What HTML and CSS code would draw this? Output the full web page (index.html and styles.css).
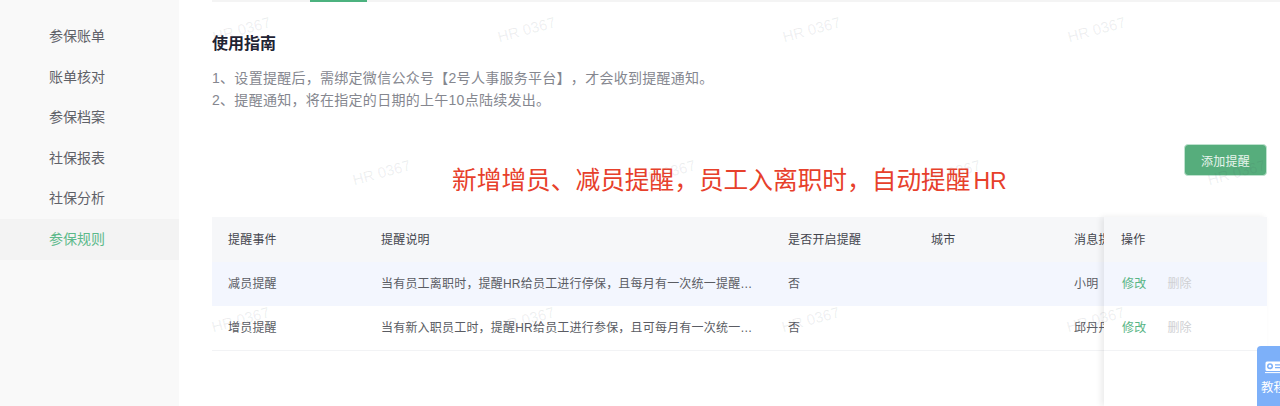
FILE: index.html
```html
<!DOCTYPE html>
<html lang="zh-CN">
<head>
<meta charset="utf-8">
<title>参保规则</title>
<link rel="stylesheet" href="styles.css">
</head>
<body>
<div class="page">
  <nav class="sidebar">
    <a class="nav-item">参保账单</a>
    <a class="nav-item">账单核对</a>
    <a class="nav-item">参保档案</a>
    <a class="nav-item">社保报表</a>
    <a class="nav-item">社保分析</a>
    <a class="nav-item active">参保规则</a>
  </nav>
  <main class="main">
    <div class="tabs"><span class="tab-ink"></span></div>
    <h2 class="guide-title">使用指南</h2>
    <p class="guide-text">1、设置提醒后，需绑定微信公众号【2号人事服务平台】，才会收到提醒通知。<br>2、提醒通知，将在指定的日期的上午10点陆续发出。</p>
    <div class="action-row">
      <div class="headline">新增增员、减员提醒，员工入离职时，自动提醒<span class="headline-hr">HR</span></div>
      <button class="add-btn">添加提醒</button>
    </div>
    <div class="table-wrap">
      <div class="row head">
        <div class="cell">提醒事件</div>
        <div class="cell">提醒说明</div>
        <div class="cell">是否开启提醒</div>
        <div class="cell">城市</div>
        <div class="cell">消息提醒人</div>
      </div>
      <div class="row tinted">
        <div class="cell">减员提醒</div>
        <div class="cell ellipsis">当有员工离职时，提醒HR给员工进行停保，且每月有一次统一提醒，请及时处理</div>
        <div class="cell">否</div>
        <div class="cell"></div>
        <div class="cell">小明</div>
      </div>
      <div class="row">
        <div class="cell">增员提醒</div>
        <div class="cell ellipsis">当有新入职员工时，提醒HR给员工进行参保，且可每月有一次统一提醒，请及时处理</div>
        <div class="cell">否</div>
        <div class="cell"></div>
        <div class="cell">邱丹丹</div>
      </div>
      <div class="fixed-col">
        <div class="fixed-cell head">操作</div>
        <div class="fixed-cell tinted"><a class="link-edit">修改</a><a class="link-del">删除</a></div>
        <div class="fixed-cell bordered"><a class="link-edit">修改</a><a class="link-del">删除</a></div>
      </div>
    </div>
    <div class="watermarks">
      <div class="wm-row wm-a"><span>HR 0367</span><span>HR 0367</span><span>HR 0367</span><span>HR 0367</span></div>
      <div class="wm-row wm-b"><span>HR 0367</span><span>HR 0367</span><span>HR 0367</span><span>HR 0367</span></div>
      <div class="wm-row wm-c"><span>HR 0367</span><span>HR 0367</span><span>HR 0367</span><span>HR 0367</span></div>
    </div>
    <aside class="help">
      <svg class="help-icon" width="22" height="13" viewBox="0 0 22 13">
        <rect x="0.5" y="0.5" width="21" height="9.5" rx="1.5" fill="#fff"/>
        <circle cx="5" cy="5.2" r="3" fill="#7db0f9"/>
        <circle cx="5" cy="5.2" r="1.4" fill="#fff"/>
        <path d="M10 3.8h8M10 6.6h8" stroke="#7db0f9" stroke-width="1.2"/>
        <path d="M0 11.6h22" stroke="#fff" stroke-width="1"/>
      </svg>
      <span class="help-text">教程</span>
    </aside>
  </main>
</div>
</body>
</html>
```
FILE: styles.css
```css
* { box-sizing: border-box; }
html, body { margin: 0; height: 100%; overflow: hidden; background: #fff; }
body { font-family: "Liberation Sans", "Noto Sans CJK SC", sans-serif; text-spacing-trim: space-all; }
.page { display: flex; height: 406px; width: 1280px; overflow: hidden; }

.sidebar { position: relative; z-index: 2; width: 179px; flex: none; padding-top: 16px; background: #f9f9f9; }
.nav-item { display: block; height: 40.6px; line-height: 40.6px; padding-left: 49px; font-size: 14px; color: #5f6168; }
.nav-item.active { color: #5cb98a; background: #f3f3f3; }

.main { position: relative; flex: 1; min-width: 0; padding: 0 13px 0 33px; display: flex; flex-direction: column; overflow: hidden; }
.tabs { position: relative; height: 2px; margin-right: -13px; background: #f4f4f4; flex: none; }
.tab-ink { position: absolute; left: 98px; top: 0; width: 57px; height: 2px; background: #4cb27f; }
.guide-title { margin: 31px 0 0; font-size: 16px; line-height: 22px; font-weight: 700; color: #1f2333; }
.guide-text { margin: 12px 0 0; font-size: 14px; line-height: 22px; letter-spacing: .28px; color: #85878f; }

.action-row { display: flex; justify-content: flex-end; height: 32px; margin-top: 33px; position: relative; flex: none; }
.headline { position: absolute; left: 240px; top: 19px; font-size: 24.7px; line-height: 36px; color: #e7402b; white-space: nowrap; }
.headline-hr { margin-left: 3px; font-size: 23px; }
.add-btn { width: 83px; height: 32px; padding: 0; border: 1px solid #bfe2cf; border-radius: 4px; background: #56ad7c; color: #e9f5ee; font: inherit; font-size: 12px; letter-spacing: .2px; }

.table-wrap { position: relative; flex: 1; margin-top: 41px; font-size: 12px; line-height: 18px; color: #5a5c63; letter-spacing: .2px; }
.row { display: grid; grid-template-columns: 153px 407px 143px 143px 1fr; height: 45px; align-items: center; border-bottom: 1px solid #f2f3f5; overflow: hidden; }
.row.head { background: #f6f7f9; border-bottom: 0; color: #43454d; }
.row.tinted { height: 44px; background: #f3f6fe; border-bottom: 0; }
.cell { padding-left: 16px; white-space: nowrap; min-width: 0; }
.cell.ellipsis { padding-right: 19px; overflow: hidden; text-overflow: ellipsis; }

.fixed-col { position: absolute; top: 0; right: 0; bottom: 0; width: 163px; background: #fff; box-shadow: -3px 0 6px rgba(0, 0, 0, .08); }
.fixed-cell { height: 45px; display: flex; align-items: center; padding-left: 18px; border-bottom: 1px solid #f2f3f5; }
.fixed-cell.head { padding-left: 17px; background: #f6f7f9; border-bottom: 0; color: #43454d; }
.fixed-cell.tinted { height: 44px; background: #f3f6fe; border-bottom: 0; }
.link-edit { color: #58b585; }
.link-del { margin-left: 21px; color: #cfd0d3; }

.watermarks { position: absolute; inset: 0; z-index: 1; pointer-events: none; overflow: hidden; }
.wm-row { position: absolute; display: flex; gap: 228px; font-family: "Liberation Sans", sans-serif; font-size: 15px; line-height: 16px; color: rgba(60, 70, 90, .09); white-space: nowrap; }
.wm-row span { display: block; width: 57px; transform: rotate(-15deg); }
.wm-a { left: 33px; top: 22px; }
.wm-b { left: 173px; top: 165px; }
.wm-c { left: 32px; top: 312px; }

.help { position: absolute; z-index: 3; right: 0; bottom: 0; width: 23px; height: 60px; border-radius: 4px 0 0 0; background: #7db0f9; color: #fff; overflow: hidden; }
.help-icon { position: absolute; left: 8px; top: 15px; }
.help-text { position: absolute; left: 4px; top: 33px; font-size: 12.5px; line-height: 18px; white-space: nowrap; }
```
